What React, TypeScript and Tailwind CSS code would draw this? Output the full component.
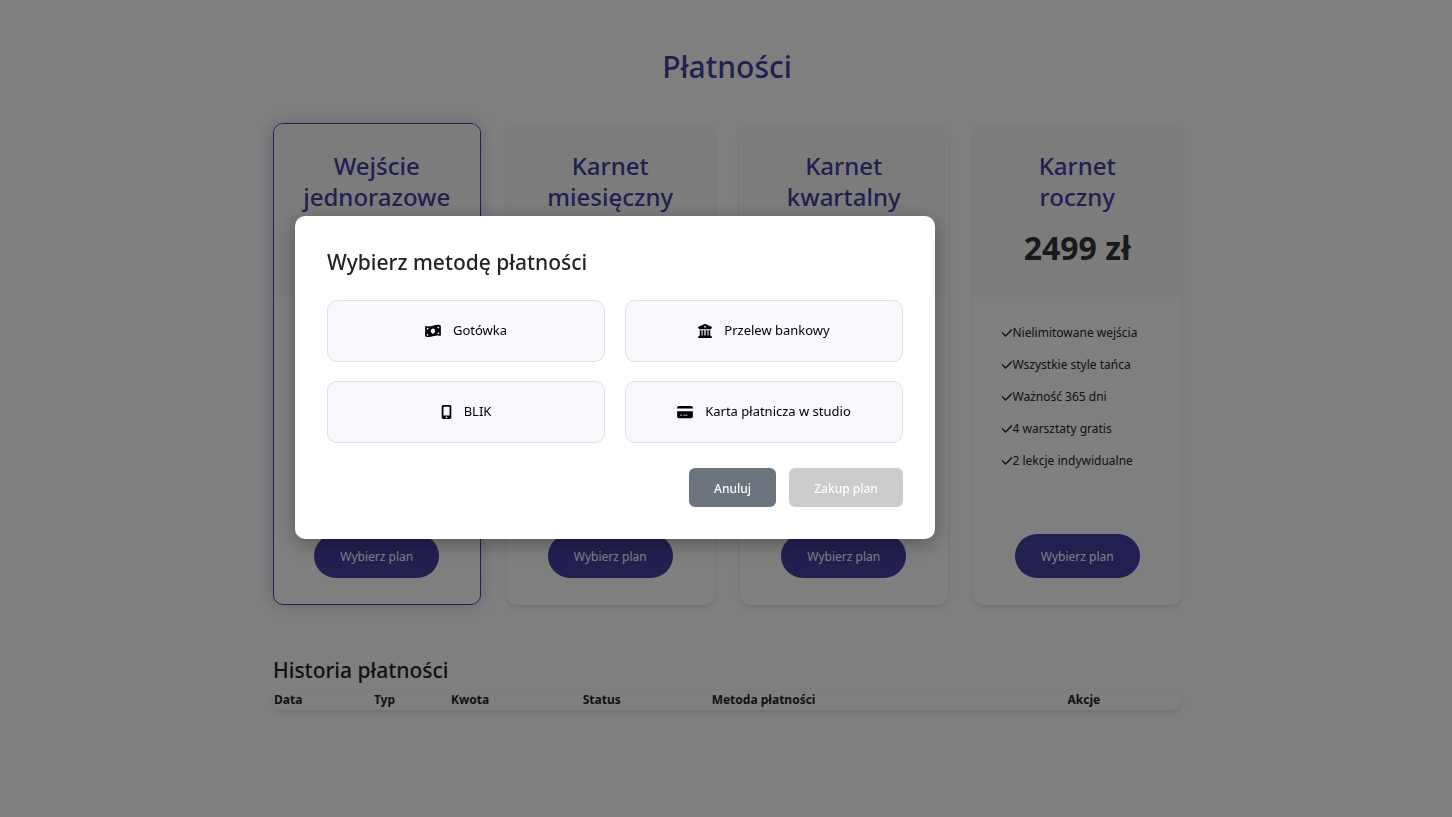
import { FaBuildingColumns, FaCheck, FaCreditCard, FaMobileScreenButton, FaMoneyBillWave } from 'react-icons/fa6';

type Plan = { first: string; second: string; price?: string; features?: string[] };

const plans: Plan[] = [
  { first: 'Wejście', second: 'jednorazowe' },
  { first: 'Karnet', second: 'miesięczny' },
  { first: 'Karnet', second: 'kwartalny' },
  {
    first: 'Karnet',
    second: 'roczny',
    price: '2499 zł',
    features: ['Nielimitowane wejścia', 'Wszystkie style tańca', 'Ważność 365 dni', '4 warsztaty gratis', '2 lekcje indywidualne'],
  },
];

const methods = [
  { label: 'Gotówka', Icon: FaMoneyBillWave, size: 'h-[14px] w-4' },
  { label: 'Przelew bankowy', Icon: FaBuildingColumns, size: 'h-[14px] w-[14px]' },
  { label: 'BLIK', Icon: FaMobileScreenButton, size: 'h-[14px] w-[11px]' },
  { label: 'Karta płatnicza w studio', Icon: FaCreditCard, size: 'h-[14px] w-4' },
];

export default function App() {
  return (
    <div className="min-h-screen bg-white font-['Noto_Sans',sans-serif] text-[12px] text-[#212529]">
      <main className="mx-auto max-w-[910px] pt-12 pb-16 pl-0.5">
        <h1 className="text-center text-[30px] leading-[38px] font-medium text-[#453ea3]">Płatności</h1>
        <section className="mt-[37px] grid grid-cols-4 gap-[26px]">
          {plans.map((plan, i) => (
            <article
              key={plan.second}
              className={
                i === 0
                  ? 'flex min-h-[482px] flex-col overflow-hidden rounded-[10px] border border-[#453ea3] shadow-[0_0_16px_rgba(69,62,163,0.3)]'
                  : 'flex min-h-[482px] flex-col overflow-hidden rounded-[10px] border border-transparent shadow-[0_3px_6px_rgba(0,0,0,0.12)]'
              }
            >
              <header className="min-h-[173px] bg-[#f8f9fa] px-6 pt-[26px] text-center">
                <h2 className="text-[24px] leading-[31px] font-medium text-[#453ea3]">
                  {plan.first}
                  <br />
                  {plan.second}
                </h2>
                {plan.price && <p className="mt-[13px] text-[32px] leading-[45px] font-bold text-[#333]">{plan.price}</p>}
              </header>
              <ul className="flex flex-1 flex-col gap-3 px-[26px] pt-[26px]">
                {plan.features?.map((f) => (
                  <li key={f} className="flex items-start leading-5 whitespace-nowrap">
                    <FaCheck className="mt-1 size-3 shrink-0" />
                    {f}
                  </li>
                ))}
              </ul>
              <button className="mx-auto mb-[26px] h-[44px] w-[125px] rounded-full bg-[#453ea3] pt-0.5 text-white">
                Wybierz plan
              </button>
            </article>
          ))}
        </section>
        <section className="mt-[52px]">
          <h2 className="text-[21px] leading-[27px] font-medium">Historia płatności</h2>
          <table className="mt-[6px] w-full table-fixed rounded-[10px] text-left shadow-[0_3px_6px_rgba(0,0,0,0.12)]">
            <thead>
              <tr className="leading-[20px]">
                <th className="w-[11%] px-px">Data</th>
                <th className="w-[8.5%] px-px">Typ</th>
                <th className="w-[14.5%] px-px">Kwota</th>
                <th className="w-[14.2%] px-px">Status</th>
                <th className="w-[39.2%] px-px">Metoda płatności</th>
                <th className="px-px">Akcje</th>
              </tr>
            </thead>
          </table>
        </section>
      </main>

      <div className="fixed inset-0 bg-black/50">
        <div className="mx-auto max-w-[862px] pt-[216px]">
          <div
            role="dialog"
            aria-modal="true"
            aria-labelledby="method-title"
            className="max-w-[640px] rounded-[10px] bg-white p-8 shadow-[0_5px_20px_rgba(0,0,0,0.3)]"
          >
            <h2 id="method-title" className="text-[21px] leading-[28px] font-medium">
              Wybierz metodę płatności
            </h2>
            <div className="mt-6 grid grid-cols-2 gap-x-5 gap-y-[19px]">
              {methods.map(({ label, Icon, size }) => (
                <button
                  key={label}
                  className="flex h-[62px] items-center justify-center gap-3 rounded-[10px] border border-[#dee2e6] bg-[#f8f9fc] text-[13px] text-black"
                >
                  <Icon className={size} />
                  {label}
                </button>
              ))}
            </div>
            <div className="mt-6 flex justify-end gap-[13px] pt-px">
              <button className="h-[39px] w-[87px] rounded-md bg-[#6c757d] pt-0.5 font-medium text-white">Anuluj</button>
              <button disabled className="h-[39px] w-[114px] rounded-md bg-[#ccc] pt-0.5 font-medium text-white">
                Zakup plan
              </button>
            </div>
          </div>
        </div>
      </div>
    </div>
  );
}
